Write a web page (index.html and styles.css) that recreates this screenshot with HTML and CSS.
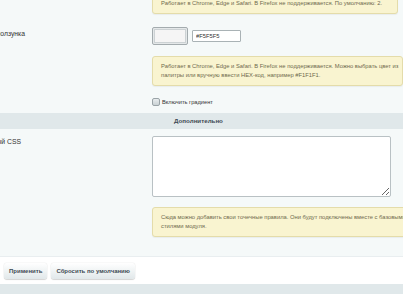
FILE: index.html
```html
<!DOCTYPE html>
<html>
<head>
  <title>Настройки модуля</title>
  <link rel="stylesheet" href="styles.css">
</head>
<body>
  <div class="content">
    <div class="row row-first">
      <div class="cell-l"></div>
      <div class="cell-r">
        <div class="note note-first">Работает в Chrome, Edge и Safari. В Firefox не поддерживается. По умолчанию: 2.</div>
      </div>
    </div>

    <div class="row row-color">
      <div class="cell-l"><span class="label label-slider">Цвет ползунка</span></div>
      <div class="cell-r color-field">
        <span class="swatch"><span class="swatch-fill"></span></span>
        <input type="text" class="text-input" value="#F5F5F5">
      </div>
    </div>

    <div class="row">
      <div class="cell-l"></div>
      <div class="cell-r">
        <div class="note note-second">Работает в Chrome, Edge и Safari. В Firefox не поддерживается. Можно выбрать цвет из<br>палитры или вручную ввести HEX-код, например #F1F1F1.</div>
      </div>
    </div>

    <div class="row row-check">
      <div class="cell-l"></div>
      <div class="cell-r">
        <label class="check"><span class="check-box"></span>Включить градиент</label>
      </div>
    </div>

    <div class="heading">Дополнительно</div>

    <div class="row row-css">
      <div class="cell-l"><span class="label label-css">Собственный CSS</span></div>
      <div class="cell-r">
        <textarea class="css-area"></textarea>
      </div>
    </div>

    <div class="row row-last">
      <div class="cell-l"></div>
      <div class="cell-r">
        <div class="note note-third">Сюда можно добавить свои точечные правила. Они будут подключены вместе с базовыми<br>стилями модуля.</div>
      </div>
    </div>
  </div>

  <div class="footer">
    <button class="btn">Применить</button>
    <button class="btn">Сбросить по умолчанию</button>
  </div>
  <div class="bottom-band"></div>
</body>
</html>
```

FILE: styles.css
```css
/* Module settings page */
body {
  margin: 0;
  padding: 0;
  font-family: "Liberation Sans", Arial, sans-serif;
  font-size: 6px;
  color: #3f4b54;
  background-color: #fff;
  overflow: hidden;
}

.content {
  background-color: #f5f9f9;
  padding-bottom: 19px;
}

.row {
  display: flex;
}

.cell-l {
  width: 152px;
  flex-shrink: 0;
  white-space: nowrap;
}

.cell-r {
  flex: 1;
  min-width: 0;
  white-space: nowrap;
}

/* labels overflow to the left of their box */
.label {
  display: flex;
  justify-content: flex-end;
  color: #333;
  font-size: 6.8px;
  line-height: 8px;
}

.label-slider {
  width: 25px;
  margin-top: 3px;
}

.label-css {
  width: 21px;
  margin-top: 2px;
}

/* yellow notes */
.note {
  background-color: #f9f4d0;
  border: 1px solid #e4dcaa;
  border-radius: 3px;
  box-shadow: 0 1px 1px rgba(0, 0, 0, 0.05);
  color: #6f6a4e;
  font-size: 5.8px;
  line-height: 9px;
  padding: 5px 8px;
  white-space: nowrap;
  box-sizing: border-box;
}

.note-first {
  width: 246px;
  margin-top: -7px;
}

.note-second {
  width: 251px;
  overflow: hidden;
}

.note-third {
  width: 262px;
}

.row-color {
  padding: 13px 0 11px;
}

.color-field {
  display: flex;
  align-items: center;
  gap: 4px;
}

.swatch {
  display: block;
  width: 36px;
  height: 18px;
  box-sizing: border-box;
  border: 1px solid #a3abae;
  border-radius: 2px;
  padding: 1px;
  background-color: #e4e8e9;
}

.swatch-fill {
  display: block;
  height: 100%;
  background-color: #f5f5f5;
  border: 1px solid #ccd2d4;
  box-sizing: border-box;
}

.text-input {
  width: 49px;
  height: 12px;
  box-sizing: border-box;
  border: 1px solid #a9b2b5;
  border-radius: 1px;
  padding: 0 3px;
  font-family: "Liberation Sans", Arial, sans-serif;
  font-size: 5.8px;
  color: #333;
  background-color: #fff;
}

.row-check {
  padding: 12px 0 7px;
}

.check {
  display: flex;
  align-items: center;
  gap: 2px;
  height: 8px;
  font-size: 5.7px;
  color: #333;
}

.check-box {
  display: block;
  width: 8px;
  height: 8px;
  box-sizing: border-box;
  border: 1px solid #9aa3a7;
  border-radius: 2px;
  background: linear-gradient(#e8ecee, #c9d1d4);
}

.heading {
  background-color: #e0e8ea;
  height: 16px;
  line-height: 16px;
  text-align: center;
  padding-right: 6px;
  font-weight: bold;
  font-size: 6.2px;
  color: #3f4b54;
}

.row-css {
  padding: 7px 0 10px;
}

.css-area {
  display: block;
  width: 239px;
  height: 61px;
  box-sizing: border-box;
  border: 1px solid #b9c1c4;
  border-radius: 2px;
  background-color: #fff;
  margin: 0;
}

/* footer with buttons */
.footer {
  background-color: #fff;
  border-top: 1px solid #e9eef0;
  padding: 6px 4px 5px;
  display: flex;
  gap: 4px;
}

.btn {
  height: 16px;
  padding: 0 5px;
  border: none;
  border-radius: 3px;
  background: linear-gradient(#fff, #e1e8ea);
  box-shadow: 0 0 1px rgba(0, 0, 0, 0.25), 0 1px 1px rgba(0, 0, 0, 0.15);
  font-family: "Liberation Sans", Arial, sans-serif;
  font-size: 6px;
  font-weight: bold;
  color: #3f4b54;
  cursor: pointer;
}

.bottom-band {
  height: 20px;
  background-color: #e0e8ea;
}
```
